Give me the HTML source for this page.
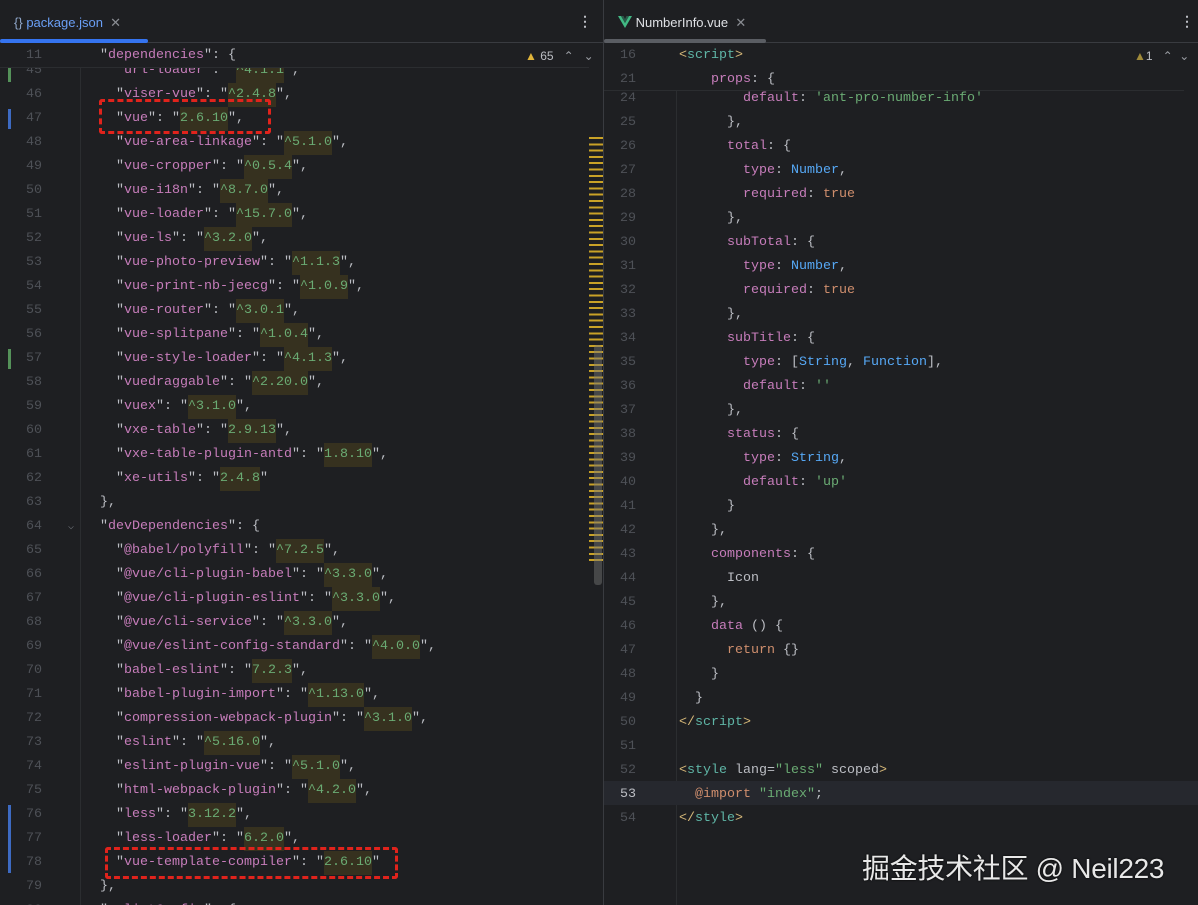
<!DOCTYPE html>
<html><head><meta charset="utf-8"><style>
*{margin:0;padding:0;box-sizing:border-box}
body{width:1198px;height:905px;background:#1e1f22;overflow:hidden;position:relative;font-family:"Liberation Mono",monospace;font-size:13.33px;color:#bcbec4}
.pane{position:absolute;top:0;height:905px;overflow:hidden;background:#1e1f22}
.tabbar{position:absolute;left:0;right:0;top:0;height:43px;border-bottom:1px solid #393b40;background:#1e1f22}
.tab{position:absolute;top:15px;font-family:"Liberation Sans",sans-serif;font-size:13px;color:#dfe1e5}
.ln{position:absolute;width:44px;text-align:right;color:#4e5157;line-height:24px;white-space:pre}
.code{position:absolute;line-height:24px;white-space:pre}
.k{color:#c77dbb}.s{color:#6aab73}.b{color:#56a8f5}.o{color:#cf8e6d}.t{color:#5fb5a6}.br{color:#d5b778}
.v{background:#36311f;display:inline-block;height:24px}
.sticky{position:absolute;left:0;right:14px;background:#1e1f22;border-bottom:1px solid #2b2d30}
.box{position:absolute;border:3px dashed #e0231c;border-radius:3px}
.bar{position:absolute;width:3px}
</style></head><body>

<!-- LEFT PANE -->
<div class="pane" style="left:0;width:603px">
  <div style="position:absolute;left:80px;top:43px;width:1px;height:862px;background:#2b2d30"></div>
  <div class="ln" style="left:-2px;top:59px">45
46
47
48
49
50
51
52
53
54
55
56
57
58
59
60
61
62
63
64
65
66
67
68
69
70
71
72
73
74
75
76
77
78
79
80</div>
  <div class="code" style="left:84px;top:59px">    "<span class="k">url-loader</span>": "<span class="s v">^4.1.1</span>",
    "<span class="k">viser-vue</span>": "<span class="s v">^2.4.8</span>",
    "<span class="k">vue</span>": "<span class="s v">2.6.10</span>",
    "<span class="k">vue-area-linkage</span>": "<span class="s v">^5.1.0</span>",
    "<span class="k">vue-cropper</span>": "<span class="s v">^0.5.4</span>",
    "<span class="k">vue-i18n</span>": "<span class="s v">^8.7.0</span>",
    "<span class="k">vue-loader</span>": "<span class="s v">^15.7.0</span>",
    "<span class="k">vue-ls</span>": "<span class="s v">^3.2.0</span>",
    "<span class="k">vue-photo-preview</span>": "<span class="s v">^1.1.3</span>",
    "<span class="k">vue-print-nb-jeecg</span>": "<span class="s v">^1.0.9</span>",
    "<span class="k">vue-router</span>": "<span class="s v">^3.0.1</span>",
    "<span class="k">vue-splitpane</span>": "<span class="s v">^1.0.4</span>",
    "<span class="k">vue-style-loader</span>": "<span class="s v">^4.1.3</span>",
    "<span class="k">vuedraggable</span>": "<span class="s v">^2.20.0</span>",
    "<span class="k">vuex</span>": "<span class="s v">^3.1.0</span>",
    "<span class="k">vxe-table</span>": "<span class="s v">2.9.13</span>",
    "<span class="k">vxe-table-plugin-antd</span>": "<span class="s v">1.8.10</span>",
    "<span class="k">xe-utils</span>": "<span class="s v">2.4.8</span>"
  },
  "<span class="k">devDependencies</span>": {
    "<span class="k">@babel/polyfill</span>": "<span class="s v">^7.2.5</span>",
    "<span class="k">@vue/cli-plugin-babel</span>": "<span class="s v">^3.3.0</span>",
    "<span class="k">@vue/cli-plugin-eslint</span>": "<span class="s v">^3.3.0</span>",
    "<span class="k">@vue/cli-service</span>": "<span class="s v">^3.3.0</span>",
    "<span class="k">@vue/eslint-config-standard</span>": "<span class="s v">^4.0.0</span>",
    "<span class="k">babel-eslint</span>": "<span class="s v">7.2.3</span>",
    "<span class="k">babel-plugin-import</span>": "<span class="s v">^1.13.0</span>",
    "<span class="k">compression-webpack-plugin</span>": "<span class="s v">^3.1.0</span>",
    "<span class="k">eslint</span>": "<span class="s v">^5.16.0</span>",
    "<span class="k">eslint-plugin-vue</span>": "<span class="s v">^5.1.0</span>",
    "<span class="k">html-webpack-plugin</span>": "<span class="s v">^4.2.0</span>",
    "<span class="k">less</span>": "<span class="s v">3.12.2</span>",
    "<span class="k">less-loader</span>": "<span class="s v">6.2.0</span>",
    "<span class="k">vue-template-compiler</span>": "<span class="s v">2.6.10</span>"
  },
  "<span class="k">eslintConfig</span>": {</div>
  <div class="sticky" style="top:43px;height:25px">
    <div class="ln" style="left:-2px;top:1px">11</div>
    <div class="code" style="left:84px;top:1px">  "<span class="k">dependencies</span>": {</div>
  </div>
  <div style="position:absolute;left:68px;top:521px;color:#6f737a;font-size:10px">⌵</div>
  <div class="bar" style="left:8px;top:68px;height:14px;background:#549159"></div>
  <div class="bar" style="left:8px;top:109px;height:20px;background:#3d6ac2"></div>
  <div class="bar" style="left:8px;top:349px;height:20px;background:#549159"></div>
  <div class="bar" style="left:8px;top:805px;height:68px;background:#3d6ac2"></div>
  <div class="box" style="left:99px;top:99px;width:172px;height:35px"></div>
  <div class="box" style="left:105px;top:847px;width:293px;height:32px"></div>
  <div style="position:absolute;left:589px;top:137px;width:14px;height:424px;background:repeating-linear-gradient(#c9a227 0 2px,transparent 2px 6.3px)"></div>
  <div style="position:absolute;left:594px;top:345px;width:8px;height:240px;background:rgba(120,120,120,.45);border-radius:3px"></div>
  <div style="position:absolute;left:525px;top:49px;font-family:'Liberation Sans',sans-serif;font-size:12px;color:#bcbec4"><span style="color:#e0b43a">▲</span> 65 &nbsp;&nbsp;<span style="color:#9a9da3">⌃ &nbsp; ⌄</span></div>
  <div class="tabbar">
    <div class="tab" style="left:14px"><span style="color:#8fa6c9">{}</span> <span style="color:#6a9ff5">package.json</span> &nbsp;<span style="color:#8a8d93">✕</span></div>
    <div style="position:absolute;left:0;top:39px;width:148px;height:4px;background:#3574f0;border-radius:2px"></div>
    <div style="position:absolute;left:578px;top:13px;color:#bcbec4;font-family:'Liberation Sans',sans-serif;font-size:14px;font-weight:bold">⋮</div>
  </div>
</div>
<div style="position:absolute;left:603px;top:0;width:1px;height:905px;background:#393b40"></div>

<!-- RIGHT PANE -->
<div class="pane" style="left:604px;width:594px">
  <div style="position:absolute;left:72px;top:43px;width:1px;height:862px;background:#2b2d30"></div>
  <div style="position:absolute;left:0;right:0;top:781px;height:24px;background:#26282e"></div>
  <div class="ln" style="left:-12px;top:87px">24
25
26
27
28
29
30
31
32
33
34
35
36
37
38
39
40
41
42
43
44
45
46
47
48
49
50
51
52
<span style="color:#bcbec4">53</span>
54</div>
  <div class="code" style="left:75px;top:87px">        <span class="k">default</span>: <span class="s">'ant-pro-number-info'</span>
      },
      <span class="k">total</span>: {
        <span class="k">type</span>: <span class="b">Number</span>,
        <span class="k">required</span>: <span class="o">true</span>
      },
      <span class="k">subTotal</span>: {
        <span class="k">type</span>: <span class="b">Number</span>,
        <span class="k">required</span>: <span class="o">true</span>
      },
      <span class="k">subTitle</span>: {
        <span class="k">type</span>: [<span class="b">String</span>, <span class="b">Function</span>],
        <span class="k">default</span>: <span class="s">''</span>
      },
      <span class="k">status</span>: {
        <span class="k">type</span>: <span class="b">String</span>,
        <span class="k">default</span>: <span class="s">'up'</span>
      }
    },
    <span class="k">components</span>: {
      Icon
    },
    <span class="k">data</span> () {
      <span class="o">return</span> {}
    }
  }
<span class="br">&lt;/</span><span class="t">script</span><span class="br">&gt;</span>

<span class="br">&lt;</span><span class="t">style</span> lang=<span class="s">"less"</span> scoped<span class="br">&gt;</span>
  <span class="o">@import</span> <span class="s">"index"</span>;
<span class="br">&lt;/</span><span class="t">style</span><span class="br">&gt;</span></div>
  <div class="sticky" style="top:43px;height:48px;border-bottom:1px solid #2b2d30">
    <div class="ln" style="left:-12px;top:1px">16
21</div>
    <div class="code" style="left:75px;top:1px"><span class="br">&lt;</span><span class="t">script</span><span class="br">&gt;</span>
    <span class="k">props</span>: {</div>
  </div>
  <div style="position:absolute;left:530px;top:49px;font-family:'Liberation Sans',sans-serif;font-size:12px;color:#bcbec4"><span style="color:#a08a3a">▲</span>1 &nbsp;&nbsp;<span style="color:#9a9da3">⌃ &nbsp;⌄</span></div>
  <div style="position:absolute;left:258px;top:847px;font-family:'Liberation Sans','Noto Sans CJK SC',sans-serif;font-size:28px;color:#e8e8e8;text-shadow:0 0 2px #000;letter-spacing:-0.3px">掘金技术社区 @ Neil223</div>
  <div class="tabbar">
    <div class="tab" style="left:14px"><svg width="14" height="12" viewBox="0 0 14 12" style="vertical-align:-1px"><path d="M0 0h3l4 7 4-7h3L7 12z" fill="#41b883"/><path d="M3 0h2.5L7 3l1.5-3H11L7 7z" fill="#2a5a4a"/></svg> NumberInfo.vue &nbsp;<span style="color:#8a8d93">✕</span></div>
    <div style="position:absolute;left:0;top:39px;width:162px;height:4px;background:#5a5d63;border-radius:2px"></div>
    <div style="position:absolute;left:576px;top:13px;color:#bcbec4;font-family:'Liberation Sans',sans-serif;font-size:14px;font-weight:bold">⋮</div>
  </div>
</div>
</body></html>
